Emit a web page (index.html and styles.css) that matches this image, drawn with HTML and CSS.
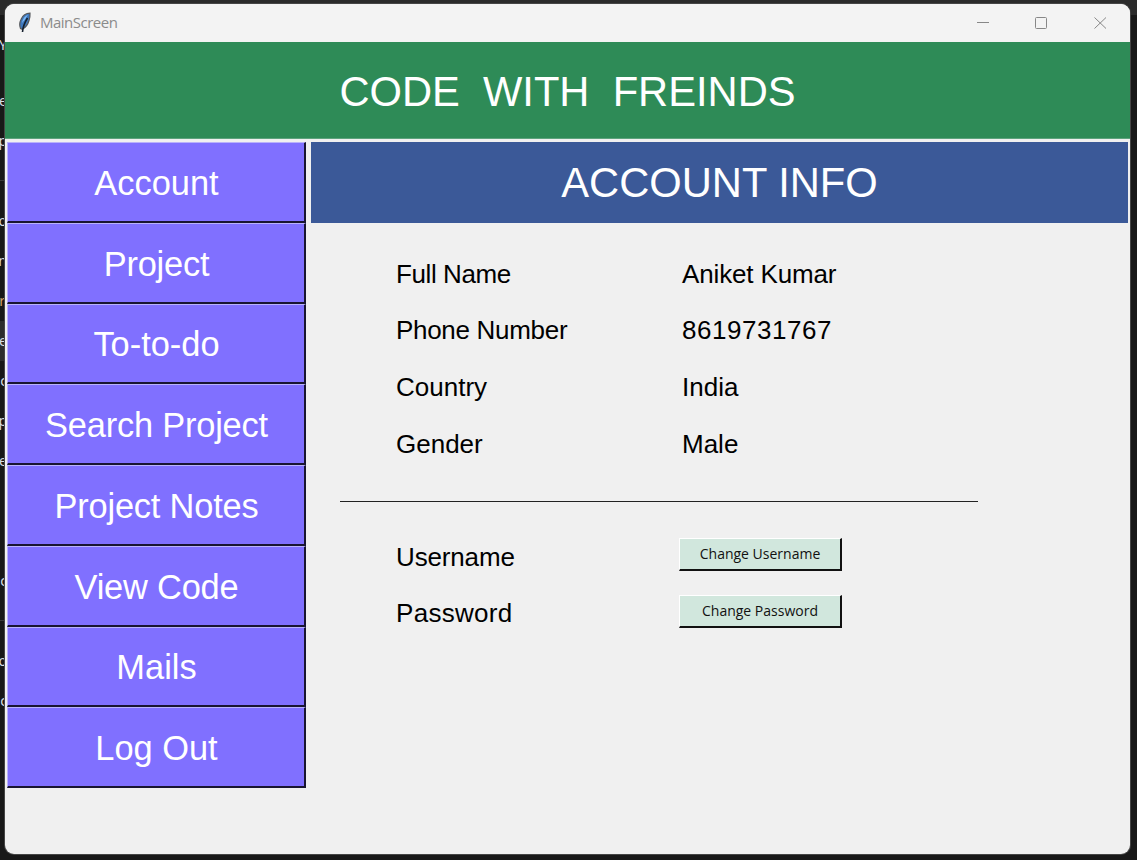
FILE: index.html
```
<!DOCTYPE html>
<html lang="en">
<head>
<meta charset="utf-8">
<title>MainScreen</title>
<link rel="stylesheet" href="styles.css">
</head>
<body>
<div class="desktop">
  <div class="editor">
    <span class="early">Y</span><span>e</span><span>p</span><span class="ruled"></span><span>to</span><span>n</span><span class="warm">r</span><span class="active">re</span><span>c</span><span>p</span><span>e</span><span></span><span></span><span>c</span><span class="ruled"></span><span>Po</span><span>c</span>
  </div>
  <main class="window">
    <header class="titlebar">
      <svg class="feather" width="14" height="21" viewBox="0 0 14 21">
        <path d="M12 1.200C8 1.200 4.500 4 3 7.500 1.500 10.500 1.500 14 2.500 16.500l1.800.8C8 15.500 10 12 11 8.500c.8-2.500 1.200-4.800 1-7.300z" fill="#3f78bd" stroke="#55585c" stroke-width="1.200"/>
        <path d="M10 2.800C7 4 4.500 7 4 11l3-3.500z" fill="#7dbaf5"/>
        <path d="M9.500 6C7 10 5 13.500 4.500 20" fill="none" stroke="#15202e" stroke-width="1.600"/>
      </svg>
      <span class="caption">MainScreen</span>
      <svg class="controls" width="132" height="14" viewBox="0 0 132 14" fill="none" stroke="#878787">
        <path d="M1 6.500h12"/>
        <rect x="59.500" y="1.500" width="11" height="11" rx="1"/>
        <path d="M118.500 1.500l11.500 11M130 1.500l-11.500 11"/>
      </svg>
    </header>
    <h1 class="banner">CODE&nbsp; WITH&nbsp; FREINDS</h1>
    <div class="body">
      <nav class="menu">
        <button class="item">Account</button>
        <button class="item snug">Project</button>
        <button class="item">To-to-do</button>
        <button class="item snug">Search Project</button>
        <button class="item snug">Project Notes</button>
        <button class="item snug">View Code</button>
        <button class="item">Mails</button>
        <button class="item">Log Out</button>
      </nav>
      <section class="panel">
        <h2 class="heading">ACCOUNT INFO</h2>
        <div class="details">
          <span class="name">Full Name</span><span class="person">Aniket Kumar</span>
          <span class="phone">Phone Number</span><span class="digits">8619731767</span>
          <span>Country</span><span>India</span>
          <span>Gender</span><span>Male</span>
        </div>
        <hr class="rule">
        <div class="details login">
          <span class="person">Username</span><button class="change">Change Username</button>
          <span class="password">Password</span><button class="change">Change Password</button>
        </div>
      </section>
    </div>
  </main>
</div>
</body>
</html>
```
FILE: styles.css
```
* { box-sizing: border-box; }
body { margin: 0; font-family: "Liberation Sans", Arial, sans-serif; }
.desktop {
  display: grid;
  grid-template-columns: 5px 1125px 7px;
  height: 860px;
  overflow: hidden;
  background: linear-gradient(#2b2b2b 15px, #181818 15px);
}
.editor {
  display: grid;
  grid-template-rows: 60px repeat(16, 40px);
  padding-top: 21px;
  overflow: hidden;
  font: 14px/40px "Noto Sans", sans-serif;
  color: #d8dde3;
}
.editor span { display: flex; justify-content: flex-end; width: 7px; }
.editor .early { padding-top: 4px; }
.editor .warm { width: 5px; color: #d6a46c; }
.editor .active { background: #2d2d2d; }
.editor .ruled { background: linear-gradient(transparent 19px, #3a3a3a 19px, #3a3a3a 20px, transparent 20px); }
.window {
  display: grid;
  grid-template-rows: 38px 97px 1fr;
  height: 850px;
  margin-top: 4px;
  overflow: hidden;
  border-radius: 9px;
  background: #f0f0f0;
  box-shadow: 0 0 0 1px #454545;
  position: relative;
}
.titlebar {
  display: flex;
  align-items: center;
  padding: 0 22px 0 13px;
  background: #f3f3f3;
}
.feather { margin-bottom: 1px; }
.caption {
  margin: -2px 0 0 8px;
  font: 15px/20px "Open Sans", sans-serif;
  letter-spacing: -0.5px;
  color: #8b8b8b;
}
.controls { margin-left: auto; }
.banner, .heading {
  display: flex;
  align-items: center;
  justify-content: center;
  margin: 0;
  color: #fff;
  font-size: 41.7px;
  font-weight: 400;
}
.banner { background: #2e8b57; padding-top: 4px; border-bottom: 1px solid #5da37d; }
.body {
  display: grid;
  grid-template-columns: 299px 817px;
  column-gap: 5px;
  padding: 3px 2px;
}
.menu {
  display: grid;
  grid-template-rows: repeat(8, 80.75px);
}
.item {
  padding: 2px 0 0 1px;
  border: solid;
  border-width: 1px 2px 2px 1px;
  border-color: #b9b2fb #191531 #191531 #b9b2fb;
  background: #8070ff;
  color: #fff;
  font: 34.4px/40px "Liberation Sans", Arial, sans-serif;
}
.snug { letter-spacing: -0.2px; }
.heading { height: 81px; background: #3b5998; }
.details {
  display: grid;
  grid-template-columns: 286px 1fr;
  grid-auto-rows: 56.6px;
  align-items: center;
  padding: 23px 0 0 85px;
  font-size: 26px;
  color: #000;
}
.name { letter-spacing: -0.4px; }
.phone { letter-spacing: -0.3px; }
.person { letter-spacing: -0.15px; }
.digits { letter-spacing: 0.55px; }
.password { letter-spacing: 0.3px; }
.rule { width: 638px; height: 1px; margin: 29px 0 0 29px; border: 0; background: #222; }
.login { padding-top: 26.5px; }
.change {
  width: 163px;
  height: 33px;
  margin: -5px 0 0 -3px;
  padding: 0;
  border: solid;
  border-width: 1px 2px 2px 1px;
  border-color: #fff #111 #111 #fff;
  background: #d1e7dd;
  color: #111;
  font: 14px/20px "Open Sans", sans-serif;
}
```
